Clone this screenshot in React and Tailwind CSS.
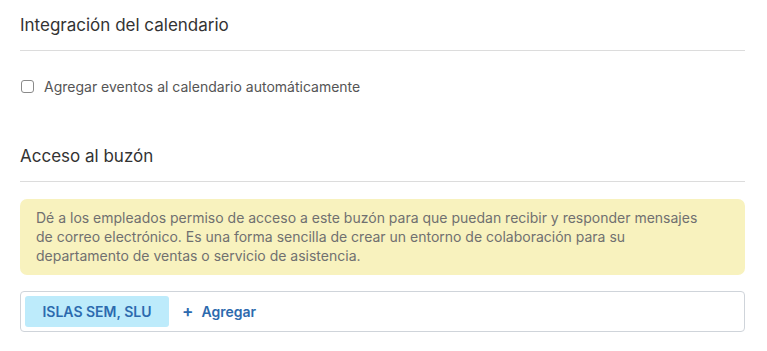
import React from 'react';

const App = () => {
  return (
    <div className="w-[767px] h-[351px] bg-white px-5 text-[#333] overflow-hidden" style={{ fontFamily: 'Inter, "Noto Sans", sans-serif' }}>
      <div className="w-[725px]">
        <h2 className="pt-[14px] pb-[14px] text-[17px] leading-[22px] text-[#333] border-b border-[#dcdcdc]">
          Integración del calendario
        </h2>

        <label className="flex items-center mt-[27px] h-[17px]">
          <span className="w-[13px] h-[13px] ml-[1px] rounded-[3px] border border-[#8a8a8a] bg-white" />
          <span className="ml-[10px] text-[14px] text-[#555]">Agregar eventos al calendario automáticamente</span>
        </label>

        <h2 className="mt-[50px] pb-[14px] text-[17px] leading-[22px] text-[#333] border-b border-[#dcdcdc]">
          Acceso al buzón
        </h2>

        <div className="mt-[17px] rounded-[7px] bg-[#f8f2be] pl-4 pr-[38px] pt-[9px] pb-[10px] text-[14px] leading-[19px] text-[#707070]">
          Dé a los empleados permiso de acceso a este buzón para que puedan recibir y responder mensajes de correo electrónico. Es una forma sencilla de crear un entorno de colaboración para su departamento de ventas o servicio de asistencia.
        </div>

        <div className="mt-[16px] flex items-center gap-[13px] rounded-[4px] border border-[#cfd4da] p-[4px]">
          <span className="h-[31px] w-[144px] flex items-center justify-center rounded-[3px] bg-[#bdebfb] text-[14px] font-semibold text-[#2c6aae]">
            ISLAS SEM, SLU
          </span>
          <span className="flex items-center text-[14px] font-semibold text-[#2c6aae]">
            <span className="mr-[8px] text-[17px] leading-none">+</span>Agregar
          </span>
        </div>
      </div>
    </div>
  );
};

export default App;
